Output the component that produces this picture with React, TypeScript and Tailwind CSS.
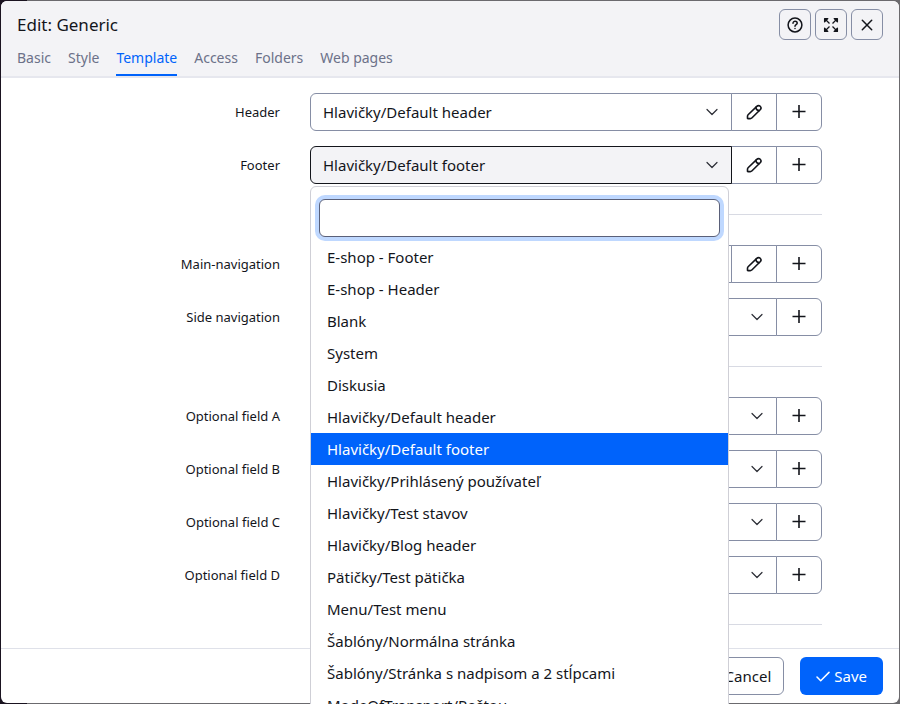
import React, { useState } from "react";

const FONT = "font-['Noto_Sans','Open_Sans',sans-serif]";

const tabs = ["Basic", "Style", "Template", "Access", "Folders", "Web pages"];

const options = [
  "E-shop - Footer",
  "E-shop - Header",
  "Blank",
  "System",
  "Diskusia",
  "Hlavičky/Default header",
  "Hlavičky/Default footer",
  "Hlavičky/Prihlásený používateľ",
  "Hlavičky/Test stavov",
  "Hlavičky/Blog header",
  "Pätičky/Test pätička",
  "Menu/Test menu",
  "Šablóny/Normálna stránka",
  "Šablóny/Stránka s nadpisom a 2 stĺpcami",
  "ModeOfTransport/Poštou",
];

function Chevron() {
  return (
    <svg viewBox="0 0 12 12" className="pointer-events-none absolute right-3.5 size-3 text-[#2b2d35]" fill="none" stroke="currentColor" strokeWidth="1.2" strokeLinecap="round" strokeLinejoin="round">
      <path d="M1 3.500 6 8.500l5-5" />
    </svg>
  );
}

function Pencil() {
  return (
    <svg viewBox="0 0 16 16" className="size-4" fill="none" stroke="currentColor" strokeWidth="1.6" strokeLinejoin="round" strokeLinecap="round">
      <path d="M1.500 12.200c0-.6.2-1.100.6-1.500L10.800 2.300a2.400 2.400 0 0 1 3.400 3.400L5.800 14c-.4.400-.9.600-1.500.600H1.900c-.3 0-.4-.1-.4-.4z" />
      <path d="M9.800 3.400c.2 1.800 1.300 2.900 3.200 3.200" />
    </svg>
  );
}

function Plus() {
  return (
    <svg viewBox="0 0 16 16" className="size-4" fill="none" stroke="currentColor" strokeWidth="1.600">
      <path d="M8 1v13M1.500 7.500h13" />
    </svg>
  );
}

function Dropdown() {
  return (
    <div className="absolute top-full left-0 z-10 mt-0.5 w-[calc(100%-93px)] rounded-t-md border border-[#cfcfd6] bg-white pt-3">
      <div className="px-2">
        <input
          type="text"
          aria-label="Search"
          className="block h-[38px] w-full rounded-md border border-[#5a6079] bg-white px-3 text-base ring-4 ring-[#bfd8ff] outline-none"
        />
      </div>
      <ul role="listbox" aria-label="Footer" className="pt-1">
        {options.map((o) => {
          const active = o === "Hlavičky/Default footer";
          return (
            <li
              key={o}
              role="option"
              aria-selected={active}
              className={"h-8 truncate px-4 text-[15px] leading-8 " + (active ? "bg-[#0063fb] text-white" : "")}
            >
              {o}
            </li>
          );
        })}
      </ul>
    </div>
  );
}

type FieldProps = { id: string; label: string; value?: string; edit?: boolean; open?: boolean };

function Field({ id, label, value = "Blank", edit, open }: FieldProps) {
  return (
    <div className="grid grid-cols-[279px_1fr] gap-[30px]">
      <label htmlFor={id} className="text-right text-[13px] leading-[38px]">
        {label}
      </label>
      <div className="relative flex h-[38px]">
        <div className="relative flex flex-1 items-center">
          <select
            id={id}
            defaultValue={value}
            className={
              "h-full w-full appearance-none rounded-l-md border px-3 text-[15px] outline-none " +
              (open ? "border-[#13151b] bg-[#f3f3f6]" : "border-[#868ea5] bg-white")
            }
          >
            {options.map((o) => (
              <option key={o}>{o}</option>
            ))}
          </select>
          <Chevron />
        </div>
        {edit && (
          <button type="button" aria-label={"Edit " + label} className="-ml-px flex w-[46px] items-center justify-center border border-[#868ea5] bg-white">
            <Pencil />
          </button>
        )}
        <button type="button" aria-label={"Add " + label} className="-ml-px flex w-[46px] items-center justify-center rounded-r-md border border-[#868ea5] bg-white">
          <Plus />
        </button>
        {open && <Dropdown />}
      </div>
    </div>
  );
}

function Divider() {
  return <hr className="my-[15px] ml-[309px] border-[#d8dae3]" />;
}

const toolButton = "flex h-[31px] w-8 items-center justify-center rounded-md border border-[#868ea5]";

export default function App() {
  const [tab, setTab] = useState("Template");
  return (
    <div className={"h-screen overflow-hidden bg-linear-to-r from-[#1a1320] from-3% to-[#6b6a6e] to-3% p-px text-[#13151b] " + FONT}>
      <div role="dialog" aria-labelledby="title" className="flex h-full flex-col rounded-md bg-white">
        <header className="rounded-t-md border-b-2 border-[#e6e7ee] bg-[#f3f3f6] px-4">
          <div className="flex h-[39px] items-end justify-between">
            <h1 id="title" className="text-[17px] leading-[30px]">Edit: Generic</h1>
            <div className="flex gap-1">
              <button type="button" aria-label="Help" className={toolButton}>
                <svg viewBox="0 0 16 16" className="size-4" fill="none" stroke="currentColor" strokeWidth="1.500" strokeLinecap="round" strokeLinejoin="round">
                  <circle cx="8" cy="8" r="6.900" />
                  <path d="M6 6.200c0-2.600 4.200-2.500 4.200 0C10.200 7.600 8 7.700 8 9.200M8 11.500v.1" />
                </svg>
              </button>
              <button type="button" aria-label="Maximize" className={toolButton}>
                <svg viewBox="0 0 16 16" className="size-4" fill="currentColor" stroke="currentColor" strokeWidth="1.300" strokeLinejoin="round">
                  <path d="M1.600 1.600h3.200L1.600 4.800zM14.400 1.600v3.200l-3.200-3.200zM14.400 14.400h-3.200l3.200-3.200zM1.600 14.400v-3.200l3.200 3.200z" />
                  <path d="m3 3 3.500 3.500M13 3 9.500 6.500M13 13 9.500 9.500M3 13l3.500-3.500" />
                </svg>
              </button>
              <button type="button" aria-label="Close" className={toolButton}>
                <svg viewBox="0 0 16 16" className="size-4" fill="none" stroke="currentColor" strokeWidth="1.500" strokeLinecap="round">
                  <path d="m3.300 3.300 9.400 9.400M12.700 3.300 3.300 12.700" />
                </svg>
              </button>
            </div>
          </div>
          <nav className="flex h-9 gap-[17px]">
            {tabs.map((t) => (
              <a
                key={t}
                href="#"
                onClick={() => setTab(t)}
                className={"border-b-2 text-sm leading-9 " + (t === tab ? "border-[#0063fb] text-[#0063fb]" : "border-transparent text-[#6c7189]")}
              >
                {t}
              </a>
            ))}
          </nav>
        </header>

        <form className="flex min-h-0 flex-1 flex-col gap-[15px] pt-[15px] pr-[77px]">
          <Field id="header" label="Header" value="Hlavičky/Default header" edit />
          <Field id="footer" label="Footer" value="Hlavičky/Default footer" edit open />
          <Divider />
          <Field id="main-nav" label="Main-navigation" edit />
          <Field id="side-nav" label="Side navigation" />
          <Divider />
          <Field id="field-a" label="Optional field A" />
          <Field id="field-b" label="Optional field B" />
          <Field id="field-c" label="Optional field C" />
          <Field id="field-d" label="Optional field D" />
          <Divider />
        </form>

        <footer className="flex justify-end gap-4 border-t border-[#dfe1e9] px-4 py-2">
          <button type="button" className="h-[38px] rounded-md border border-[#868ea5] px-3 text-[15px]">Cancel</button>
          <button type="button" className="flex h-[38px] items-center gap-1 rounded-md bg-[#0063fb] px-4 text-[15px] text-white">
            <svg viewBox="0 0 14 14" className="size-3.5" fill="none" stroke="currentColor" strokeWidth="1.500" strokeLinecap="round" strokeLinejoin="round">
              <path d="m1 8 3.700 3.700L13 3.400" />
            </svg>
            Save
          </button>
        </footer>
      </div>
    </div>
  );
}
